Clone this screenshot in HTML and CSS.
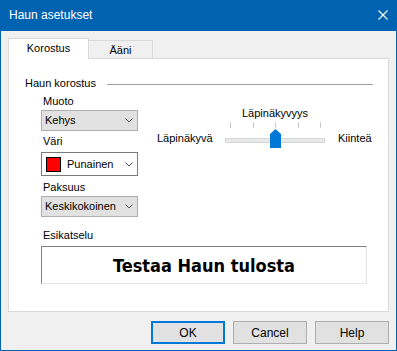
FILE: index.html
```html
<!DOCTYPE html>
<html lang="fi">
<head>
    <meta charset="UTF-8">
    <title>Haun asetukset</title>
    <link rel="stylesheet" href="styles.css">
</head>
<body>
    <div class="window">
        <div class="titlebar">
            <span class="title">Haun asetukset</span>
            <svg class="close" width="10" height="10" viewBox="0 0 10 10">
                <path d="M0.5 0.5 L9.5 9.5 M9.5 0.5 L0.5 9.5" stroke="#fff" stroke-width="1.1" fill="none"/>
            </svg>
        </div>
        <div class="content">
            <div class="tabs">
                <div class="tab active">Korostus</div>
                <div class="tab">Ääni</div>
            </div>
            <div class="panel">
                <div class="group-title">
                    <span>Haun korostus</span>
                    <div class="group-line"></div>
                </div>
                <div class="settings">
                    <div class="left-col">
                        <div class="field-label">Muoto</div>
                        <div class="combo">
                            <span>Kehys</span>
                            <svg class="chevron" width="8" height="5" viewBox="0 0 8 5"><path d="M0.5 0.5 L4 4 L7.5 0.5" stroke="#555" fill="none"/></svg>
                        </div>
                        <div class="field-label">Väri</div>
                        <div class="combo color-combo">
                            <span class="swatch"></span>
                            <span class="color-name">Punainen</span>
                            <svg class="chevron" width="8" height="5" viewBox="0 0 8 5"><path d="M0.5 0.5 L4 4 L7.5 0.5" stroke="#555" fill="none"/></svg>
                        </div>
                        <div class="field-label">Paksuus</div>
                        <div class="combo">
                            <span>Keskikokoinen</span>
                            <svg class="chevron" width="8" height="5" viewBox="0 0 8 5"><path d="M0.5 0.5 L4 4 L7.5 0.5" stroke="#555" fill="none"/></svg>
                        </div>
                    </div>
                    <div class="slider-area">
                        <div></div>
                        <div class="slider-title">Läpinäkyvyys</div>
                        <div></div>
                        <div></div>
                        <div class="ticks">
                            <span></span><span></span><span></span><span></span><span></span>
                        </div>
                        <div></div>
                        <div class="slider-end">Läpinäkyvä</div>
                        <div class="track">
                            <svg class="thumb" width="11" height="19" viewBox="0 0 11 19">
                                <polygon points="0,5 5.5,0 11,5 11,19 0,19" fill="#0078d7"/>
                            </svg>
                        </div>
                        <div class="slider-end">Kiinteä</div>
                    </div>
                </div>
                <div class="preview-label">Esikatselu</div>
                <div class="preview">Testaa Haun tulosta</div>
            </div>
            <div class="buttons">
                <button class="btn default">OK</button>
                <button class="btn">Cancel</button>
                <button class="btn">Help</button>
            </div>
        </div>
    </div>
</body>
</html>
```

FILE: styles.css
```css
body {
    margin: 0;
    font-family: "Liberation Sans", Arial, sans-serif;
    font-size: 11px;
    line-height: 15px;
    color: #000;
}
.window {
    width: 397px;
    height: 351px;
    box-sizing: border-box;
    border: 1px solid #0063b1;
    border-top: none;
    background-color: #f0f0f0;
}
.titlebar {
    box-sizing: border-box;
    height: 31px;
    background-color: #0063b1;
    color: #fff;
    font-size: 12px;
    display: flex;
    align-items: center;
    justify-content: space-between;
    padding: 0 9px 1px 9px;
    margin: 0 -1px;
}
.content {
    padding: 7px 7px 0 7px;
}
.tabs {
    display: flex;
    align-items: flex-start;
    height: 20px;
    position: relative;
    z-index: 1;
}
.tab {
    box-sizing: border-box;
    border: 1px solid #d9d9d9;
    border-bottom: none;
    text-align: center;
    padding-top: 2px;
}
.tab.active {
    width: 81px;
    height: 21px;
    background-color: #fff;
}
.tab:not(.active) {
    width: 64px;
    height: 18px;
    margin-top: 2px;
    border-left: none;
    background-color: #f0f0f0;
}
.panel {
    box-sizing: border-box;
    height: 254px;
    border: 1px solid #d9d9d9;
    background-color: #fff;
    padding: 17px 15px 0 16px;
}
.group-title {
    display: flex;
    align-items: center;
    gap: 11px;
    height: 15px;
}
.group-line {
    flex: 1;
    border-top: 1px solid #a0a0a0;
    margin-top: 1px;
}
.settings {
    display: flex;
    padding-left: 16px;
}
.left-col {
    width: 97px;
    display: flex;
    flex-direction: column;
}
.field-label {
    padding-left: 2px;
    height: 15px;
    margin-bottom: 1px;
}
.left-col .field-label:first-child {
    margin-top: 3px;
}
.combo {
    box-sizing: border-box;
    height: 21px;
    border: 1px solid #adadad;
    background-color: #e1e1e1;
    display: flex;
    align-items: center;
    justify-content: space-between;
    padding: 0 4px 0 3px;
}
.combo + .field-label {
    margin-top: 3px;
    margin-bottom: 3px;
}
.color-combo {
    height: 24px;
    background-color: #fff;
    border-color: #7a7a7a;
    justify-content: flex-start;
    padding-left: 4px;
}
.color-combo + .field-label {
    margin-top: 4px;
    margin-bottom: 1px;
}
.swatch {
    box-sizing: border-box;
    width: 15px;
    height: 15px;
    background-color: #ff0000;
    border: 1px solid #000;
}
.color-name {
    margin-left: 6px;
    flex: 1;
}
.slider-area {
    margin-left: 19px;
    margin-top: 15px;
    display: grid;
    grid-template-columns: 55px 100px auto;
    column-gap: 13px;
    align-content: start;
    align-items: start;
}
.slider-title {
    text-align: center;
    height: 15px;
    white-space: nowrap;
}
.ticks {
    display: flex;
    justify-content: space-between;
    padding: 0 4px 0 5px;
    height: 6px;
    margin-top: 1px;
}
.ticks span {
    width: 1px;
    height: 6px;
    background-color: #c8c8c8;
}
.slider-end {
    margin-top: 3px;
    white-space: nowrap;
}
.track {
    position: relative;
    box-sizing: border-box;
    height: 5px;
    margin-top: 10px;
    border: 1px solid #d6d6d6;
    background-color: #e7eaea;
}
.thumb {
    position: absolute;
    left: 44px;
    top: -10px;
}
.preview-label {
    margin-top: 11px;
    padding-left: 18px;
    height: 15px;
}
.preview {
    box-sizing: border-box;
    margin: 3px 6px 0 16px;
    height: 38px;
    border-top: 1px solid #828282;
    border-left: 1px solid #828282;
    border-right: 1px solid #e3e3e3;
    border-bottom: 1px solid #e3e3e3;
    font-family: "DejaVu Sans Condensed", "DejaVu Sans", sans-serif;
    font-stretch: condensed;
    font-weight: bold;
    font-size: 18px;
    display: flex;
    align-items: center;
    justify-content: center;
}
.buttons {
    display: flex;
    justify-content: flex-end;
    gap: 8px;
    margin-top: 9px;
}
.btn {
    box-sizing: border-box;
    width: 74px;
    height: 23px;
    border: 1px solid #adadad;
    background-color: #e1e1e1;
    font-family: "Liberation Sans", Arial, sans-serif;
    font-size: 12px;
    padding: 0;
    color: #000;
}
.btn.default {
    border: 2px solid #0078d7;
}
```
